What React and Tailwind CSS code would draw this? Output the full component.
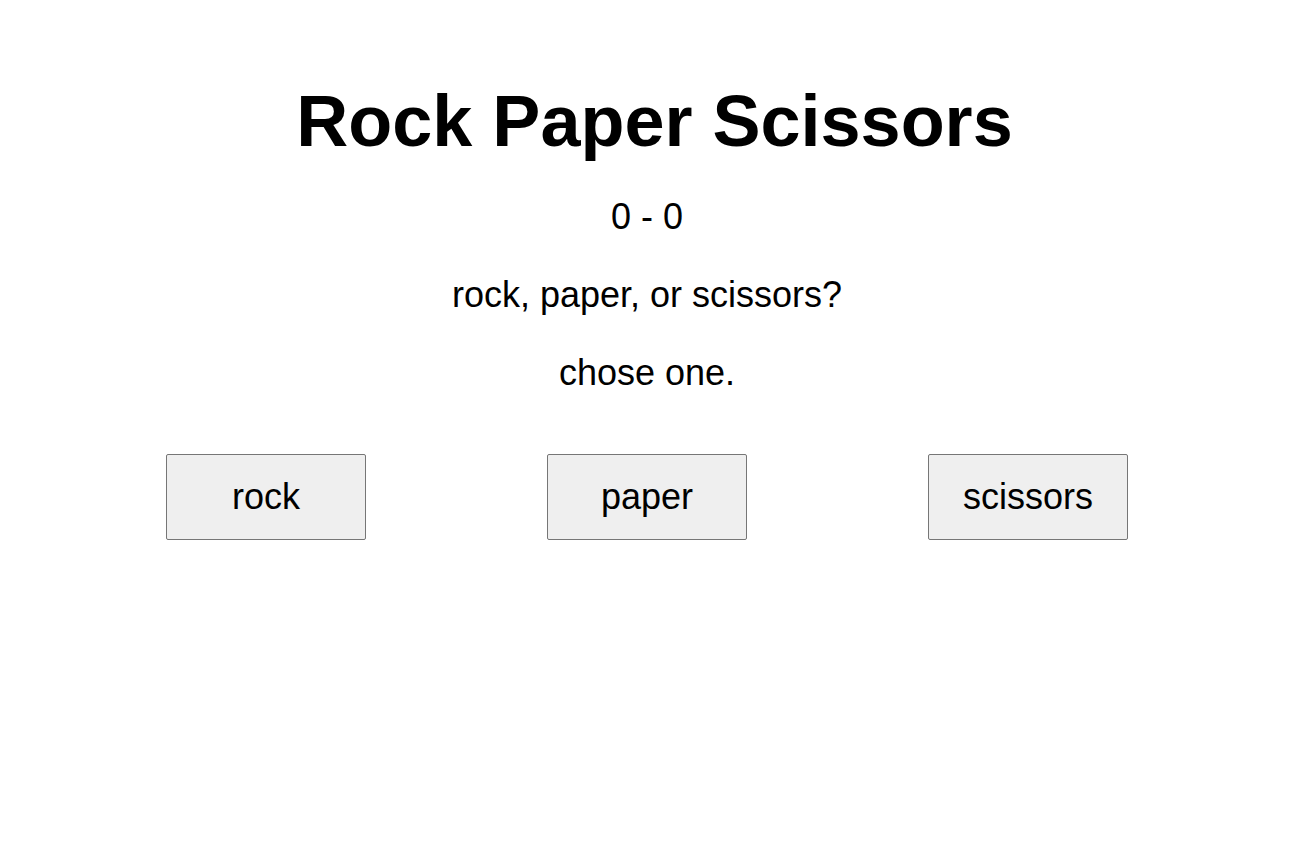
const choices = ["rock", "paper", "scissors"];

export default function App() {
  return (
    <div className="min-h-screen w-full bg-white text-black font-['Liberation_Sans',Arial,sans-serif] text-[36px]">
      <h1 className="pt-[80px] text-center text-[72px] font-bold leading-[83px]">Rock Paper Scissors</h1>
      <div className="w-[1294px] text-center">
        <p className="mt-[33px] leading-[41px]">0 - 0</p>
        <p className="mt-[37px] leading-[41px]">rock, paper, or scissors?</p>
        <p className="mt-[37px] leading-[41px]">chose one.</p>
        <div className="mt-[61px] flex justify-center gap-[181px]">
          {choices.map((c) => (
            <button
              key={c}
              className="h-[86px] w-[200px] rounded-[2px] border border-[#767676] bg-[#efefef] pb-[1px] text-[36px] leading-[41px] text-black"
            >
              {c}
            </button>
          ))}
        </div>
      </div>
    </div>
  );
}
